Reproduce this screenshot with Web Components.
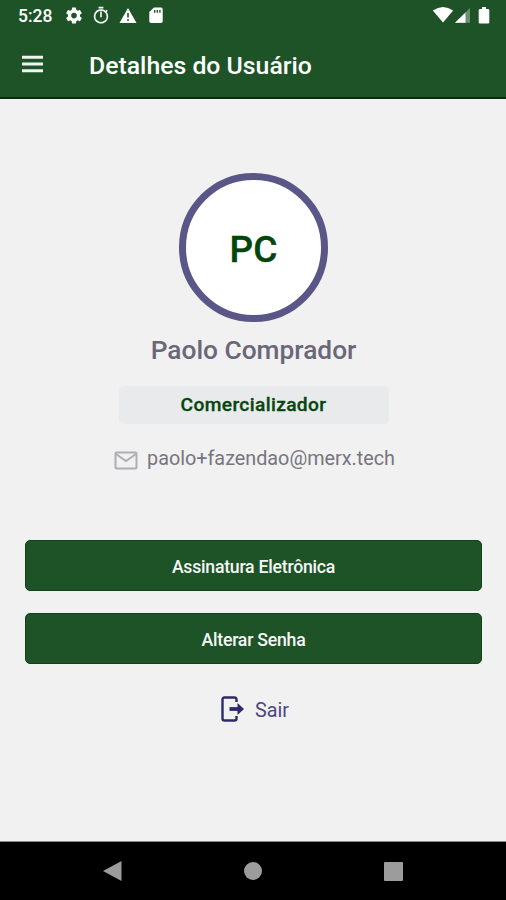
<!DOCTYPE html>
<html lang="pt-BR">
<head>
<meta charset="utf-8">
<title>Detalhes do Usuário</title>
<style>
  body {
    margin: 0;
    width: 506px;
    height: 900px;
    overflow: hidden;
    background: #f1f1f1;
    font-family: Roboto, "Liberation Sans", sans-serif;
    --green: #1e5327;
    --edge: #124219;
  }
</style>
</head>
<body>
<user-screen>
  <status-bar slot="top" time="5:28"></status-bar>
  <app-header slot="top">Detalhes do Usuário</app-header>
  <user-profile initials="PC">
    <span slot="name">Paolo Comprador</span>
    <span slot="role">Comercializador</span>
    <span slot="email">paolo+fazendao@merx.tech</span>
  </user-profile>
  <action-button>Assinatura Eletrônica</action-button>
  <action-button>Alterar Senha</action-button>
  <logout-link>Sair</logout-link>
  <system-nav slot="bottom"></system-nav>
</user-screen>

<script>
const define = (name, html, setup) => {
  const template = document.createElement('template');
  template.innerHTML = html;

  customElements.define(name, class extends HTMLElement {
    connectedCallback() {
      if (!this.shadowRoot) {
        this.attachShadow({ mode: 'open' });
        this.shadowRoot.appendChild(template.content.cloneNode(true));
        if (setup) setup(this, this.shadowRoot);
      }
    }
  });
};

define('user-screen', `
  <style>
    :host {
      display: flex;
      flex-direction: column;
      height: 900px;
    }

    main {
      flex: 1;
      display: flex;
      flex-direction: column;
      padding: 74px 24px 0 25px;
    }
  </style>

  <slot name="top"></slot>
  <main><slot></slot></main>
  <slot name="bottom"></slot>
`);

define('status-bar', `
  <style>
    :host {
      display: flex;
      justify-content: space-between;
      box-sizing: border-box;
      height: 32px;
      padding: 0 16px 0 18px;
      background: var(--green);
      color: #fff;
    }

    div {
      display: flex;
      align-items: center;
    }

    .time {
      width: 46px;
      font-size: 17.5px;
      font-weight: 500;
      line-height: 32px;
    }

    svg {
      display: block;
      fill: currentColor;
    }
  </style>

  <div>
    <span class="time"></span>
    <svg width="100" height="32" viewBox="64 0 100 32">
      <g transform="translate(64.4 6) scale(.8)">
        <path d="M19.43 12.98c.04-.32.07-.64.07-.98s-.03-.66-.07-.98l2.11-1.65c.19-.15.24-.42.12-.64l-2-3.46c-.12-.22-.39-.3-.61-.22l-2.49 1c-.52-.4-1.08-.73-1.69-.98l-.38-2.65A.49.49 0 0 0 14 2h-4c-.25 0-.46.18-.49.42l-.38 2.65c-.61.25-1.17.59-1.69.98l-2.49-1c-.23-.09-.49 0-.61.22l-2 3.46c-.13.22-.07.49.12.64l2.11 1.65c-.04.32-.07.65-.07.98s.03.66.07.98l-2.11 1.65c-.19.15-.24.42-.12.64l2 3.46c.12.22.39.3.61.22l2.49-1c.52.4 1.08.73 1.69.98l.38 2.65c.03.24.24.42.49.42h4c.25 0 .46-.18.49-.42l.38-2.65c.61-.25 1.17-.59 1.69-.98l2.49 1c.23.09.49 0 .61-.22l2-3.46c.12-.22.07-.49-.12-.64zM12 15.5a3.5 3.5 0 1 1 0-7 3.5 3.5 0 0 1 0 7z"/>
      </g>
      <g transform="translate(91.4 6) scale(.8)">
        <path d="M15 1H9v2h6V1zm-4 13h2V7h-2v7zm8.03-6.61 1.42-1.42c-.43-.51-.9-.99-1.41-1.41l-1.42 1.42A9 9 0 1 0 19.03 7.39zM12 20a7 7 0 1 1 0-14 7 7 0 0 1 0 14z"/>
      </g>
      <path fill-rule="evenodd" d="M128 8l8.5 15h-17zM127.2 13v4.5h1.6V13zm0 6v1.7h1.6V19z"/>
      <path fill-rule="evenodd" d="M154 7.5h7a1.7 1.7 0 0 1 1.7 1.7v12.1A1.7 1.7 0 0 1 161 23h-10a1.7 1.7 0 0 1-1.7-1.7V12zM154 10v2.8h1.4V10zm2.6 0v2.8h1.4V10zm2.6 0v2.8h1.4V10z"/>
    </svg>
  </div>
  <svg width="58" height="32" viewBox="432 0 58 32">
    <path d="M432.8 10.5q10.2-7 20.4 0L443 22.5z"/>
    <path opacity=".35" d="M470 8v14.8h-15z"/>
    <path d="M465.5 12.4v10.4H455z"/>
    <path d="M482 7h4v2h2q1.3 0 1.3 1.3v12q0 1.2-1.3 1.2h-8q-1.3 0-1.3-1.2v-12Q478.7 9 480 9h2z"/>
  </svg>
`, (host, root) => {
  root.querySelector('.time').textContent = host.getAttribute('time');
});

define('app-header', `
  <style>
    :host {
      display: flex;
      align-items: center;
      box-sizing: border-box;
      height: 67px;
      padding: 0 0 1px 22px;
      gap: 46px;
      background: var(--green);
      border-bottom: 2px solid #0c2c10;
      color: #fff;
    }

    h1 {
      margin: 4px 0 0;
      font-size: 24.8px;
      font-weight: 500;
      line-height: 30px;
      white-space: nowrap;
    }
  </style>

  <svg width="21" height="18" fill="#f0f4f0">
    <path d="M0 .7h21v3H0zM0 7.5h21v3H0zM0 14.3h21v3H0z"/>
  </svg>
  <h1><slot></slot></h1>
`);

define('user-profile', `
  <style>
    :host {
      display: flex;
      flex-direction: column;
      align-items: center;
      height: 367px;
    }

    .avatar {
      box-sizing: border-box;
      width: 149px;
      height: 149px;
      border: 7px solid #5a5687;
      border-radius: 50%;
      background: #fff;
      color: #04450c;
      font-size: 37px;
      font-weight: 500;
      line-height: 140px;
      text-align: center;
      -webkit-text-stroke: .4px;
    }

    .name {
      margin-top: 12px;
      color: #6a6778;
      font-size: 26.3px;
      font-weight: 500;
      line-height: 32px;
    }

    .role {
      width: 270px;
      height: 38px;
      margin-top: 20px;
      border-radius: 5px;
      background: #e8eaeb;
      color: #07450f;
      font-size: 19.2px;
      font-weight: 500;
      line-height: 37px;
      letter-spacing: .35px;
      text-align: center;
      -webkit-text-stroke: .3px;
    }

    .email {
      display: flex;
      align-items: center;
      gap: 9px;
      margin: 21px 0 0 2px;
      color: #77757f;
      font-size: 19.8px;
      line-height: 28px;
    }

    svg {
      margin-top: 2px;
    }
  </style>

  <div class="avatar"></div>
  <div class="name"><slot name="name"></slot></div>
  <div class="role"><slot name="role"></slot></div>
  <div class="email">
    <svg width="24" height="19" fill="none" stroke="#aeaeb2" stroke-width="2">
      <rect x="1.5" y="1.5" width="21" height="16" rx="1"/>
      <path d="M2 3l10 7 10-7"/>
    </svg>
    <slot name="email"></slot>
  </div>
`, (host, root) => {
  root.querySelector('.avatar').textContent = host.getAttribute('initials');
});

define('action-button', `
  <style>
    :host {
      display: block;
      margin-bottom: 22px;
    }

    button {
      display: block;
      box-sizing: border-box;
      width: 100%;
      height: 51px;
      padding: 3px 0 0;
      border: 1px solid var(--edge);
      border-radius: 5px;
      background: var(--green);
      color: #f4f7f4;
      font: 500 17.7px Roboto, "Liberation Sans", sans-serif;
      letter-spacing: -.25px;
    }
  </style>

  <button><slot></slot></button>
`);

define('logout-link', `
  <style>
    :host {
      display: flex;
      align-items: center;
      justify-content: center;
      gap: 11px;
      margin: 10px 0 0 3px;
      color: #4c4780;
      font-size: 19.8px;
      line-height: 26px;
    }

    span {
      padding-top: 2px;
      margin-bottom: -2px;
    }
  </style>

  <svg width="23" height="26" fill="none" stroke="#2e286c" stroke-width="2.4">
    <path d="M15.5 6V3.5q0-2-2-2h-10q-2 0-2 2v19q0 2 2 2h10q2 0 2-2V20"/>
    <path stroke-width="3.8" d="M8.5 13h10"/>
    <path fill="#2e286c" stroke="none" d="M16.5 7l6.5 6-6.5 6z"/>
  </svg>
  <span><slot></slot></span>
`);

define('system-nav', `
  <style>
    :host {
      display: flex;
      align-items: center;
      justify-content: space-between;
      box-sizing: border-box;
      height: 59px;
      padding: 0 103px;
      border-top: 1px solid #888;
      background: #000;
    }

    svg {
      display: block;
      fill: #9c9c9c;
    }
  </style>

  <svg width="19" height="22"><path d="M18.5 1v20L0 11z"/></svg>
  <svg width="18" height="18"><circle cx="9" cy="9" r="9"/></svg>
  <svg width="19" height="19"><rect width="19" height="19" rx="1"/></svg>
`);
</script>
</body>
</html>
